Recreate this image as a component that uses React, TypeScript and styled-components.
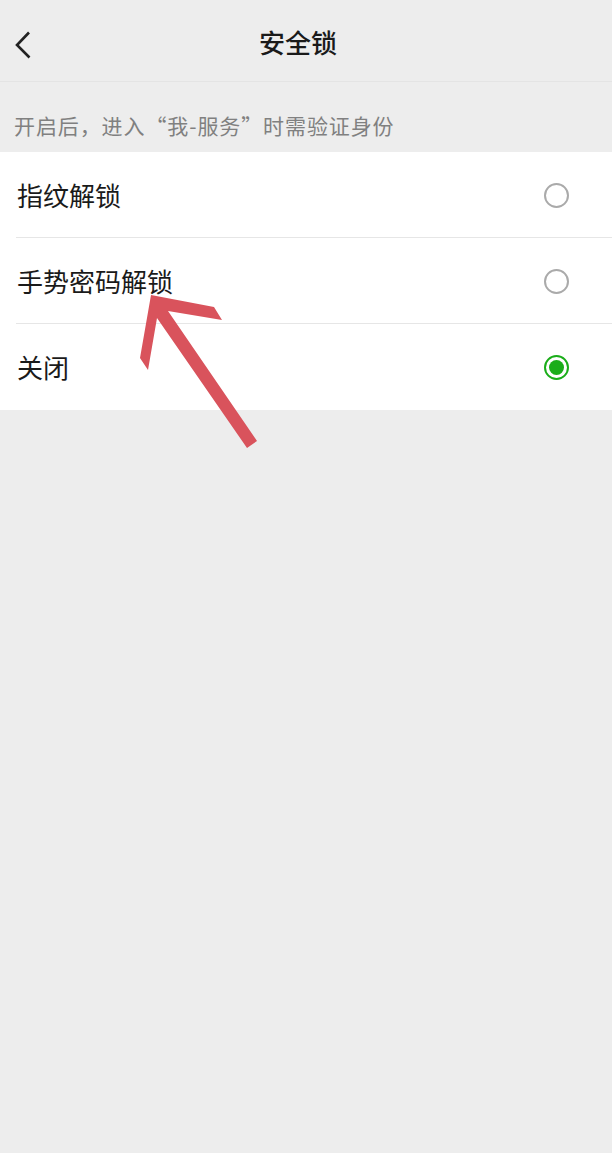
import React, { useState, ReactElement } from 'react';
import styled, { createGlobalStyle } from 'styled-components';

const colors = {
  BG: '#ededed',
  WHITE: '#ffffff',
  TEXT: '#1a1a1a',
  HINT: '#808080',
  LINE: '#e6e6e6',
  RING: '#aaaaaa',
  GREEN: '#1aad19',
  ARROW: '#d9535c',
};

const GlobalStyle = createGlobalStyle`
  html, body {
    margin: 0;
    padding: 0;
    background: ${colors.BG};
  }
  body {
    font-family: 'Noto Sans CJK SC', 'Noto Sans', sans-serif;
  }
`;

const Page = styled.div`
  position: relative;
  width: 612px;
  height: 1153px;
  background: ${colors.BG};
  overflow: hidden;
`;

const NavBar = styled.header`
  position: relative;
  height: 82px;
  display: flex;
  align-items: center;
  justify-content: center;
  padding-right: 16px;
  box-sizing: border-box;
  border-bottom: 1px solid #e4e4e4;
`;

const BackButton = styled.button`
  position: absolute;
  left: 8px;
  top: 24px;
  width: 32px;
  height: 42px;
  padding: 0;
  border: none;
  background: transparent;
  display: flex;
  align-items: center;
  justify-content: center;
`;

const Title = styled.h1`
  margin: 0;
  font-size: 26px;
  font-weight: 500;
  color: ${colors.TEXT};
  line-height: 1;
  margin-top: 2px;
`;

const Hint = styled.p`
  margin: 0;
  padding: 33px 14px 0;
  height: 37px;
  font-size: 21px;
  letter-spacing: 0.9px;
  line-height: 1;
  color: ${colors.HINT};
`;

const List = styled.ul`
  margin: 0;
  padding: 0;
  list-style: none;
  background: ${colors.WHITE};
`;

const Row = styled.li<{ $last?: boolean }>`
  position: relative;
  height: 86px;
  display: flex;
  align-items: center;
  justify-content: space-between;
  padding: 0 43px 0 17px;
  box-sizing: border-box;
  font-size: 26px;
  color: ${colors.TEXT};
  cursor: pointer;

  &::after {
    content: '';
    display: ${(p) => (p.$last ? 'none' : 'block')};
    position: absolute;
    left: 16px;
    right: 0;
    bottom: 0;
    height: 1px;
    background: ${colors.LINE};
  }
`;

const Label = styled.span`
  line-height: 1;
  margin-top: -1px;
`;

const Radio = styled.span<{ $checked: boolean }>`
  width: 25px;
  height: 25px;
  box-sizing: border-box;
  border-radius: 50%;
  border: 2px solid ${(p) => (p.$checked ? colors.GREEN : colors.RING)};
  display: flex;
  align-items: center;
  justify-content: center;

  &::before {
    content: '';
    display: ${(p) => (p.$checked ? 'block' : 'none')};
    width: 15px;
    height: 15px;
    border-radius: 50%;
    background: ${colors.GREEN};
  }
`;

const Pointer = styled.svg`
  position: absolute;
  left: 0;
  top: 0;
  pointer-events: none;
`;

const options = ['指纹解锁', '手势密码解锁', '关闭'];

const App = (): ReactElement => {
  const [selected, setSelected] = useState(2);

  return (
    <Page>
      <GlobalStyle />
      <NavBar>
        <BackButton aria-label="返回">
          <svg width="20" height="30" viewBox="0 0 20 30">
            <path
              d="M15 2.5 L3 15 L15.5 27.5"
              fill="none"
              stroke="#222"
              strokeWidth="2.6"
              strokeLinejoin="miter"
            />
          </svg>
        </BackButton>
        <Title>安全锁</Title>
      </NavBar>
      <Hint>开启后，进入“我-服务”时需验证身份</Hint>
      <List>
        {options.map((label, i) => (
          <Row
            key={label}
            $last={i === options.length - 1}
            onClick={() => setSelected(i)}
          >
            <Label>{label}</Label>
            <Radio $checked={selected === i} />
          </Row>
        ))}
      </List>
      {/* red annotation arrow */}
      <Pointer width="612" height="1153">
        <polygon
          points="151,295 214,307 222,320 168,311 257,441 247,448 157,318 148,370 140,358"
          fill={colors.ARROW}
        />
      </Pointer>
    </Page>
  );
};

export default App;
